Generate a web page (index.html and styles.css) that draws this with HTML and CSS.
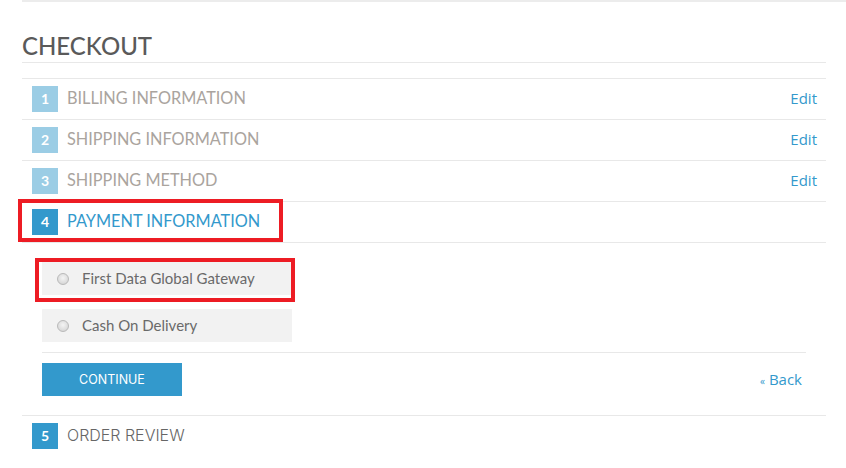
FILE: index.html
```html
<!doctype html>
<html lang="en">
  <head>
    <meta charset="UTF-8" />
    <title>Checkout</title>
    <link rel="stylesheet" href="styles.css">
  </head>
  <body>
    <div class="top-rule"></div>
    <div class="page">
      <h1 class="page-title">CHECKOUT</h1>
      <ol class="steps">
        <li class="step done">
          <div class="step-head">
            <span class="step-num">1</span>
            <span class="step-name">BILLING INFORMATION</span>
            <a class="edit" href="#">Edit</a>
          </div>
        </li>
        <li class="step done">
          <div class="step-head">
            <span class="step-num">2</span>
            <span class="step-name">SHIPPING INFORMATION</span>
            <a class="edit" href="#">Edit</a>
          </div>
        </li>
        <li class="step done">
          <div class="step-head">
            <span class="step-num">3</span>
            <span class="step-name">SHIPPING METHOD</span>
            <a class="edit" href="#">Edit</a>
          </div>
        </li>
        <li class="step active">
          <div class="step-head">
            <span class="step-num">4</span>
            <span class="step-name">PAYMENT INFORMATION</span>
            <span class="mark mark-head"></span>
          </div>
          <div class="step-body">
            <div class="methods">
              <label class="method">
                <input type="radio" name="payment" />
                <span class="method-name">First Data Global Gateway</span>
                <span class="mark mark-method"></span>
              </label>
              <label class="method">
                <input type="radio" name="payment" />
                <span class="method-name">Cash On Delivery</span>
              </label>
            </div>
            <div class="actions">
              <button class="btn-continue">CONTINUE</button>
              <a class="back" href="#"><small>&laquo;</small> Back</a>
            </div>
          </div>
        </li>
        <li class="step">
          <div class="step-head">
            <span class="step-num">5</span>
            <span class="step-name">ORDER REVIEW</span>
          </div>
        </li>
      </ol>
    </div>
  </body>
</html>
```

FILE: styles.css
```css
body {
  margin: 0;
  font-family: Lato, "Open Sans", sans-serif;
  background: #fff;
}
.top-rule {
  margin-left: 22px;
  border-top: 2px solid #ececec;
}
.page {
  width: 804px;
  margin-left: 22px;
}
.page-title {
  margin: 0;
  padding-top: 27px;
  height: 33px;
  line-height: 33px;
  font-size: 24px;
  font-weight: 500;
  color: #5a5a5a;
  border-bottom: 1px solid #e8e8e8;
}
.steps {
  list-style: none;
  margin: 15px 0 0;
  padding: 0;
}
.step {
  border-top: 1px solid #e8e8e8;
}
.step-head {
  position: relative;
  display: flex;
  align-items: center;
  height: 40px;
  padding-left: 10px;
}
.step-num {
  width: 26px;
  height: 26px;
  line-height: 26px;
  text-align: center;
  font-size: 14px;
  font-weight: 700;
  color: #fff;
  background: #9bcde5;
}
.step-name {
  flex: 1;
  margin-left: 9px;
  margin-bottom: 3px;
  font-size: 16.3px;
  color: #aaa49e;
}
.edit {
  font-family: "Open Sans", sans-serif;
  font-size: 15px;
  color: #3399cc;
  text-decoration: none;
  margin-right: 9px;
  margin-bottom: 2px;
}
.step.active .step-num {
  background: #3399cc;
}
.step.active .step-name {
  color: #3399cc;
}
.step:last-child .step-num {
  background: #3399cc;
}
.step:last-child .step-name {
  font-family: Inter, sans-serif;
  font-size: 16px;
  font-weight: 300;
  color: #666;
}
.mark {
  position: absolute;
  border: 4px solid #ed1c24;
  pointer-events: none;
}
.mark-head {
  left: -4px;
  top: -3px;
  width: 257px;
  height: 35px;
}
.step-body {
  padding: 19px 20px 19px 20px;
  border-top: 1px solid #e8e8e8;
}
.methods {
  display: flex;
  flex-direction: column;
  gap: 14px;
  padding-bottom: 10px;
  border-bottom: 1px solid #e8e8e8;
}
.method {
  position: relative;
  display: flex;
  align-items: center;
  width: 250px;
  height: 33px;
  background: #f2f2f2;
  font-size: 15px;
  color: #6a6a6a;
}
.method-name {
  margin-bottom: 2px;
}
.method input {
  appearance: none;
  margin: 0 13px 0 15px;
  width: 12px;
  height: 12px;
  border: 1px solid #b9b9b9;
  border-radius: 50%;
  background: radial-gradient(circle at 50% 40%, #f4f4f4, #cfcfcf);
}
.mark-method {
  left: -7px;
  top: -4px;
  width: 252px;
  height: 36px;
}
.actions {
  display: flex;
  align-items: center;
  justify-content: space-between;
  padding-top: 10px;
}
.btn-continue {
  width: 140px;
  height: 33px;
  border: none;
  background: #3399cc;
  color: #fff;
  font-family: Inter, sans-serif;
  font-size: 12.5px;
  cursor: pointer;
}
.back {
  font-family: "Open Sans", sans-serif;
  font-size: 15px;
  color: #3399cc;
  text-decoration: none;
  margin-right: 4px;
  margin-bottom: 2px;
}
.back small {
  font-size: 10px;
}
```
